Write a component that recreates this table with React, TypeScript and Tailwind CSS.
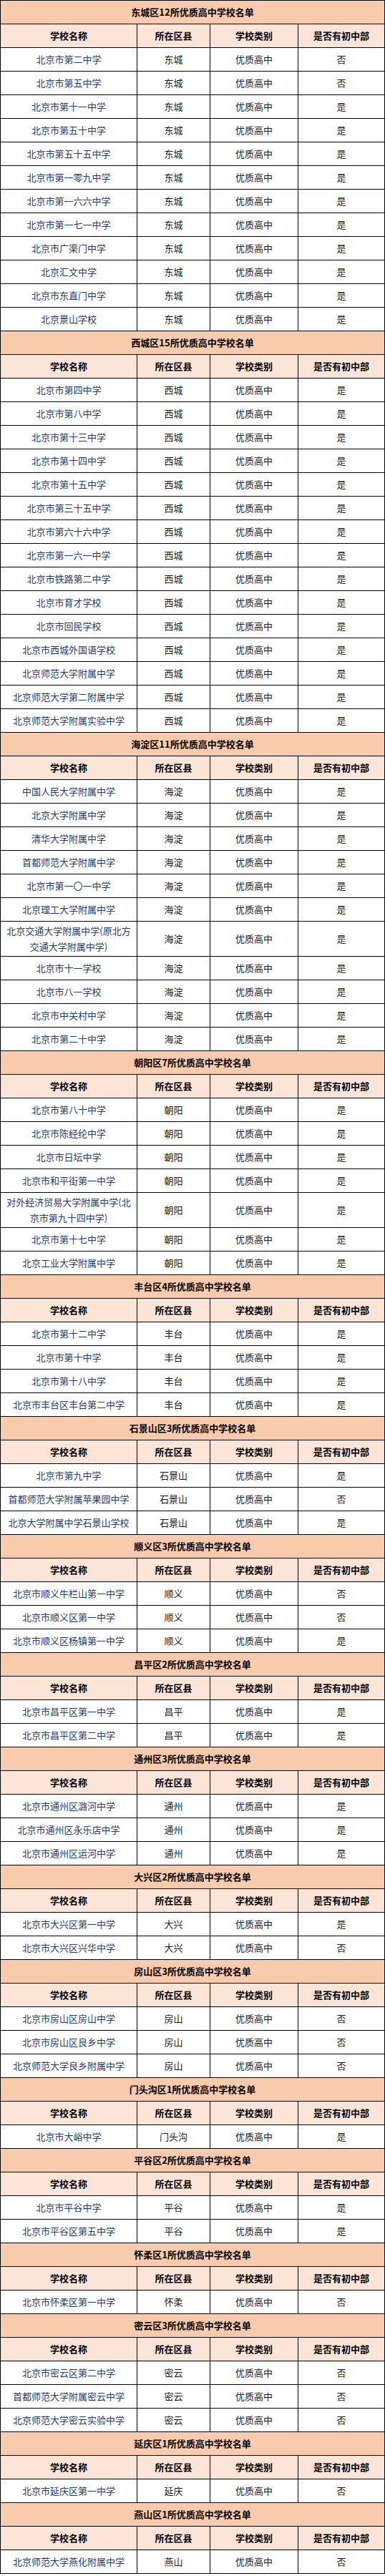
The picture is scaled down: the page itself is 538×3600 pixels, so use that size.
type School = { name: string; yes: boolean };
type Section = { district: string; title: string; schools: School[] };

const y = (name: string): School => ({ name, yes: true });
const n = (name: string): School => ({ name, yes: false });

const sections: Section[] = [
  {
    district: "东城",
    title: "东城区12所优质高中学校名单",
    schools: [
      n("北京市第二中学"),
      n("北京市第五中学"),
      y("北京市第十一中学"),
      y("北京市第五十中学"),
      y("北京市第五十五中学"),
      y("北京市第一零九中学"),
      y("北京市第一六六中学"),
      y("北京市第一七一中学"),
      y("北京市广渠门中学"),
      y("北京汇文中学"),
      y("北京市东直门中学"),
      y("北京景山学校"),
    ],
  },
  {
    district: "西城",
    title: "西城区15所优质高中学校名单",
    schools: [
      y("北京市第四中学"),
      y("北京市第八中学"),
      y("北京市第十三中学"),
      y("北京市第十四中学"),
      y("北京市第十五中学"),
      y("北京市第三十五中学"),
      y("北京市第六十六中学"),
      y("北京市第一六一中学"),
      y("北京市铁路第二中学"),
      y("北京市育才学校"),
      y("北京市回民学校"),
      y("北京市西城外国语学校"),
      y("北京师范大学附属中学"),
      y("北京师范大学第二附属中学"),
      y("北京师范大学附属实验中学"),
    ],
  },
  {
    district: "海淀",
    title: "海淀区11所优质高中学校名单",
    schools: [
      y("中国人民大学附属中学"),
      y("北京大学附属中学"),
      y("清华大学附属中学"),
      y("首都师范大学附属中学"),
      y("北京市第一〇一中学"),
      y("北京理工大学附属中学"),
      y("北京交通大学附属中学(原北方交通大学附属中学)"),
      y("北京市十一学校"),
      y("北京市八一学校"),
      y("北京市中关村中学"),
      y("北京市第二十中学"),
    ],
  },
  {
    district: "朝阳",
    title: "朝阳区7所优质高中学校名单",
    schools: [
      y("北京市第八十中学"),
      y("北京市陈经纶中学"),
      y("北京市日坛中学"),
      y("北京市和平街第一中学"),
      y("对外经济贸易大学附属中学(北京市第九十四中学)"),
      y("北京市第十七中学"),
      y("北京工业大学附属中学"),
    ],
  },
  {
    district: "丰台",
    title: "丰台区4所优质高中学校名单",
    schools: [
      y("北京市第十二中学"),
      y("北京市第十中学"),
      y("北京市第十八中学"),
      y("北京市丰台区丰台第二中学"),
    ],
  },
  {
    district: "石景山",
    title: "石景山区3所优质高中学校名单",
    schools: [
      y("北京市第九中学"),
      n("首都师范大学附属苹果园中学"),
      y("北京大学附属中学石景山学校"),
    ],
  },
  {
    district: "顺义",
    title: "顺义区3所优质高中学校名单",
    schools: [
      n("北京市顺义牛栏山第一中学"),
      n("北京市顺义区第一中学"),
      y("北京市顺义区杨镇第一中学"),
    ],
  },
  {
    district: "昌平",
    title: "昌平区2所优质高中学校名单",
    schools: [y("北京市昌平区第一中学"), y("北京市昌平区第二中学")],
  },
  {
    district: "通州",
    title: "通州区3所优质高中学校名单",
    schools: [
      y("北京市通州区潞河中学"),
      y("北京市通州区永乐店中学"),
      y("北京市通州区运河中学"),
    ],
  },
  {
    district: "大兴",
    title: "大兴区2所优质高中学校名单",
    schools: [y("北京市大兴区第一中学"), n("北京市大兴区兴华中学")],
  },
  {
    district: "房山",
    title: "房山区3所优质高中学校名单",
    schools: [
      n("北京市房山区房山中学"),
      n("北京市房山区良乡中学"),
      n("北京师范大学良乡附属中学"),
    ],
  },
  {
    district: "门头沟",
    title: "门头沟区1所优质高中学校名单",
    schools: [y("北京市大峪中学")],
  },
  {
    district: "平谷",
    title: "平谷区2所优质高中学校名单",
    schools: [y("北京市平谷中学"), y("北京市平谷区第五中学")],
  },
  {
    district: "怀柔",
    title: "怀柔区1所优质高中学校名单",
    schools: [n("北京市怀柔区第一中学")],
  },
  {
    district: "密云",
    title: "密云区3所优质高中学校名单",
    schools: [
      n("北京市密云区第二中学"),
      n("首都师范大学附属密云中学"),
      n("北京师范大学密云实验中学"),
    ],
  },
  {
    district: "延庆",
    title: "延庆区1所优质高中学校名单",
    schools: [n("北京市延庆区第一中学")],
  },
  {
    district: "燕山",
    title: "燕山区1所优质高中学校名单",
    schools: [n("北京师范大学燕化附属中学")],
  },
];

const headers = ["学校名称", "所在区县", "学校类别", "是否有初中部"];

const cell =
  "flex items-center justify-center text-center border-r border-b border-black px-[6px] leading-[22px] min-h-[33px] py-[2px]";

export default function App() {
  return (
    <div className="w-[538px] bg-white text-[13px] font-['Noto_Sans_CJK_SC','Noto_Sans',sans-serif]">
      <div className="border-t border-l border-black">
        {sections.map((section) => (
          <div key={section.district}>
            <div className={`${cell} h-[33px] bg-[#f8cbad] font-bold text-black`}>
              {section.title}
            </div>
            <div className="grid grid-cols-[191px_102px_123px_121px]">
              {headers.map((h) => (
                <div key={h} className={`${cell} h-[33px] bg-[#fce4d6] font-bold text-black`}>
                  {h}
                </div>
              ))}
              {section.schools.map((school) => (
                <div key={school.name} className="contents">
                  <div className={`${cell} text-[#1f3a6e]`}>{school.name}</div>
                  <div className={`${cell} text-[#1a1a1a]`}>{section.district}</div>
                  <div className={`${cell} text-[#1a1a1a]`}>优质高中</div>
                  <div className={`${cell} text-[#1a1a1a]`}>{school.yes ? "是" : "否"}</div>
                </div>
              ))}
            </div>
          </div>
        ))}
      </div>
    </div>
  );
}
